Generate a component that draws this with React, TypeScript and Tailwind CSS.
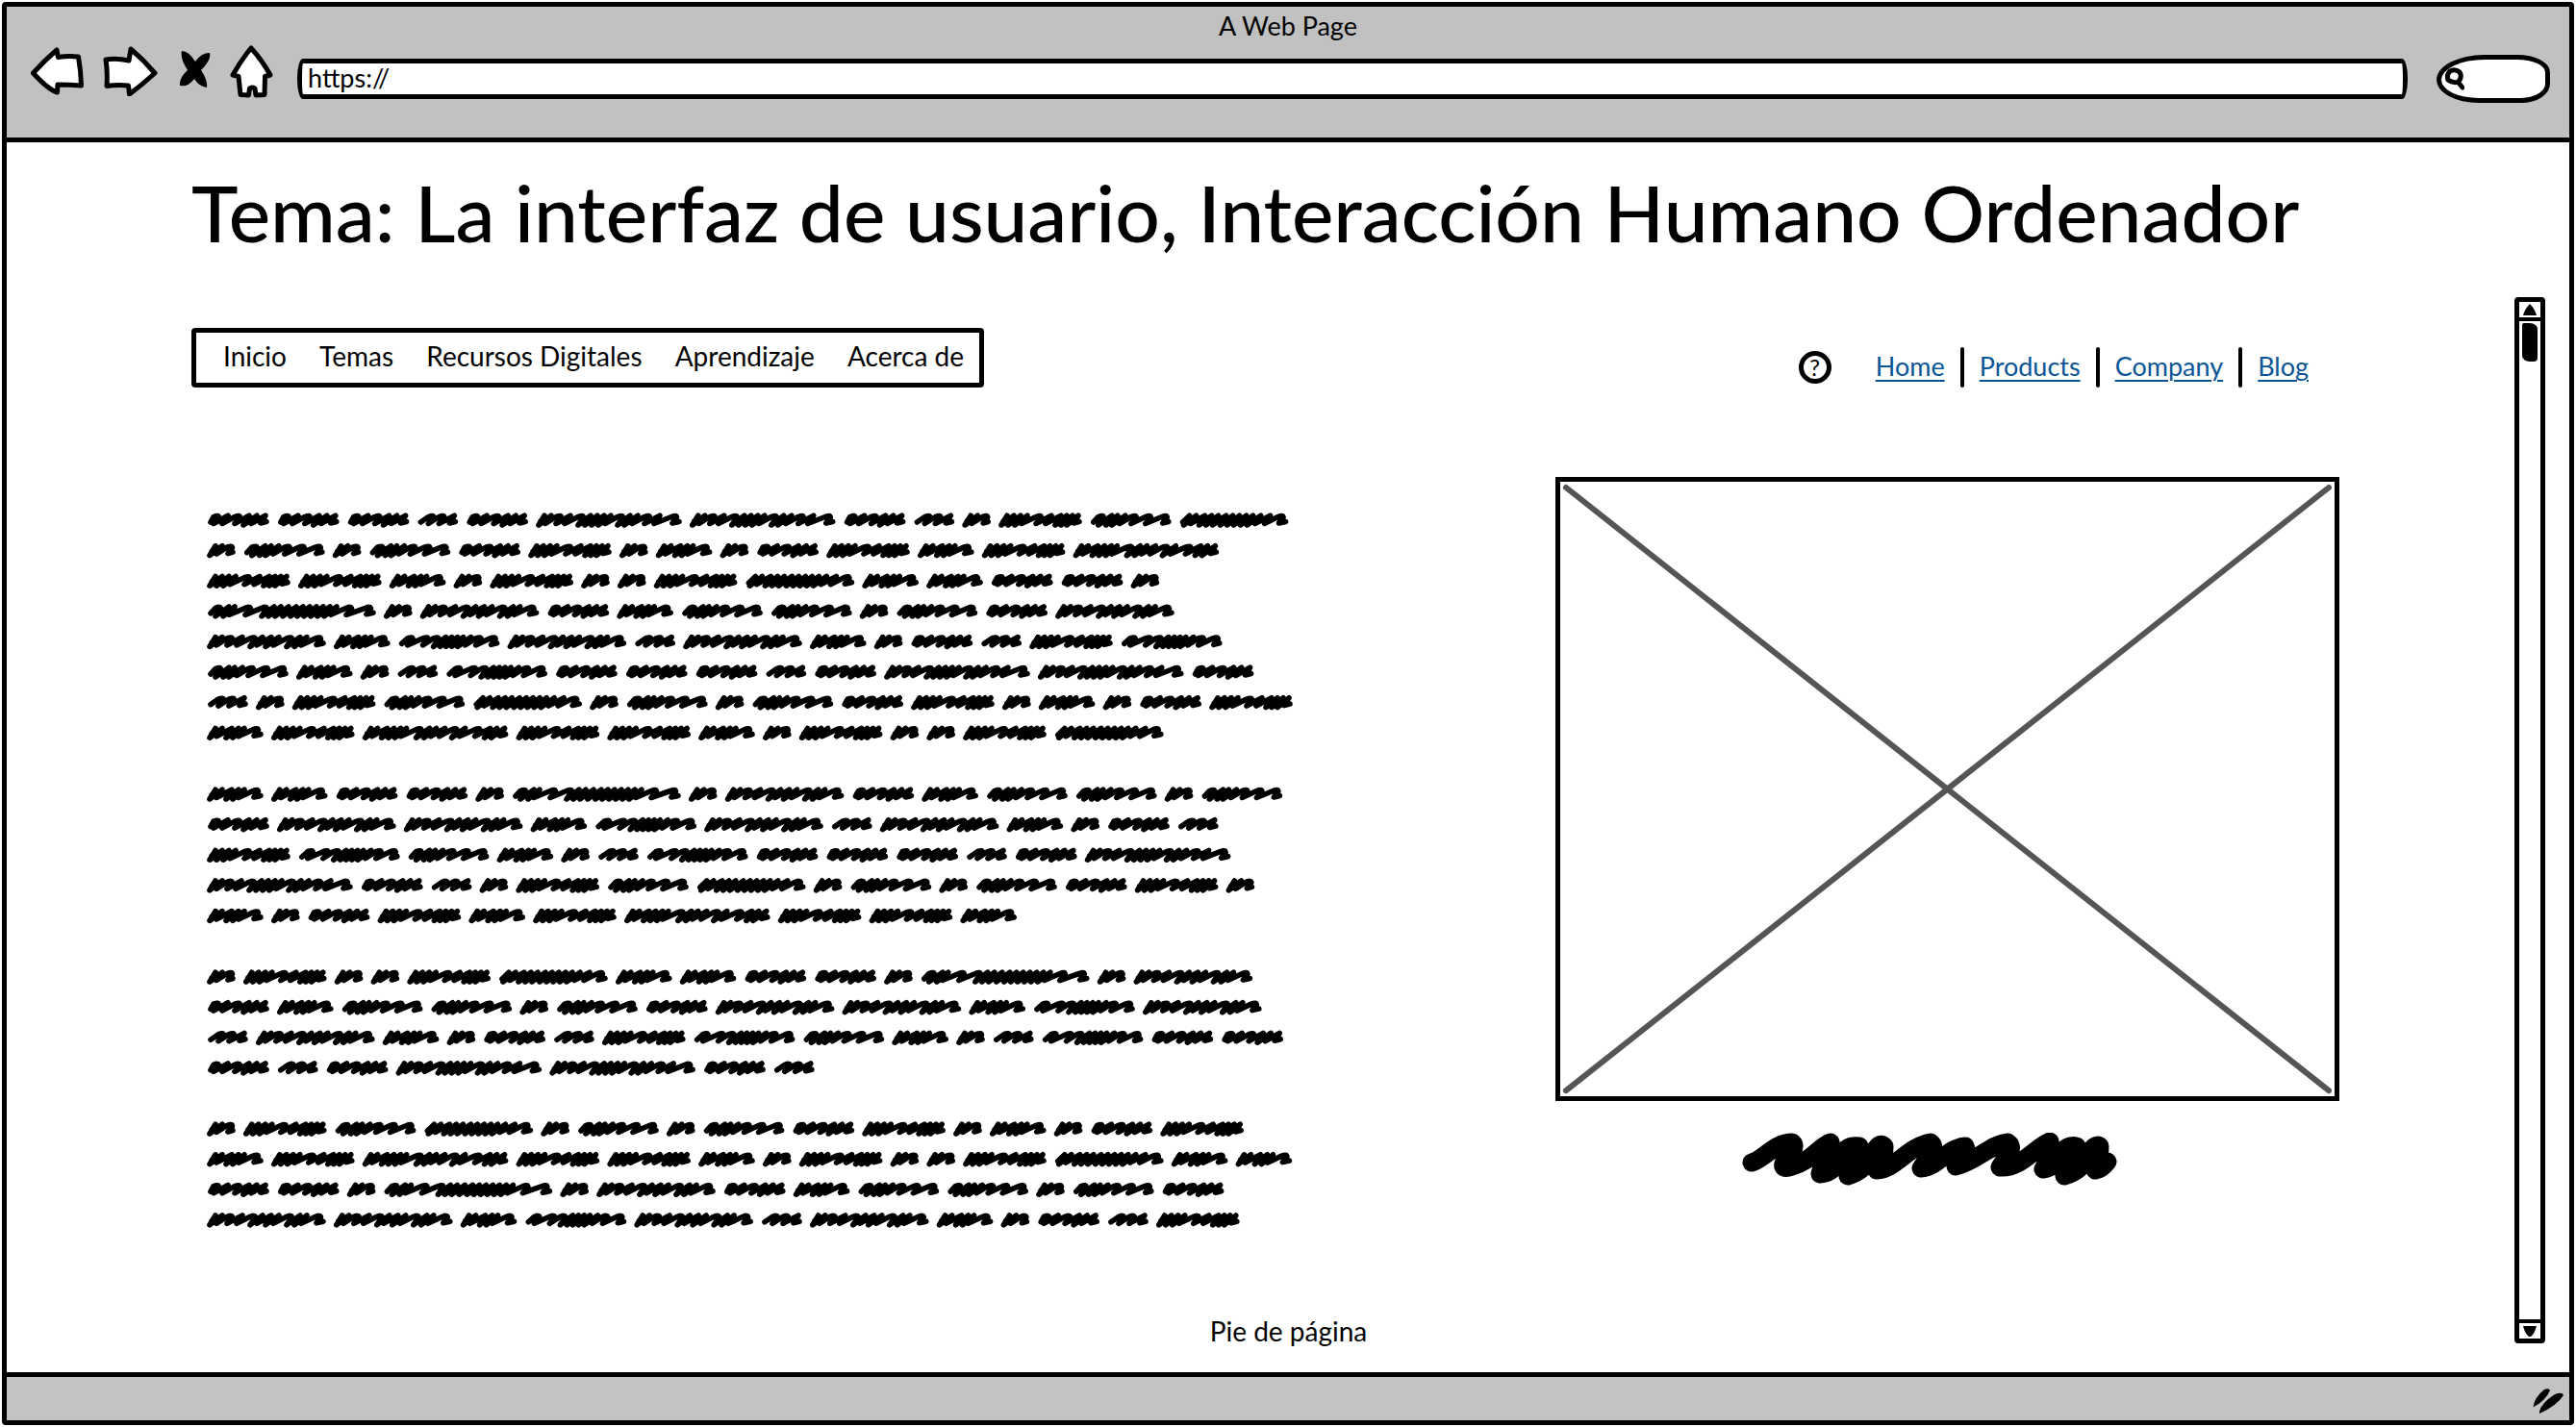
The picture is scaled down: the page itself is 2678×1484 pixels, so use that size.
import React from "react";

type Word = { width: number; heavy: boolean; tops: number[] };

// Scribbled words: the x positions of each pen peak, in pixels from the word's left edge.
const WORDS: Record<string, Word> = {
  b: { width: 29, heavy: true, tops: [8, 15, 26] },
  c: { width: 42, heavy: false, tops: [17, 28, 38] },
  d: { width: 58, heavy: true, tops: [8, 15, 25, 32, 38, 53] },
  e: { width: 64, heavy: false, tops: [12, 21, 34, 43, 51, 60] },
  f: { width: 84, heavy: false, tops: [14, 22, 28, 36, 48, 63, 80] },
  g: { width: 86, heavy: true, tops: [8, 15, 22, 29, 44, 54, 64, 70, 76, 82] },
  h: { width: 105, heavy: false, tops: [15, 31, 42, 49, 55, 61, 67, 75, 86, 101] },
  i: { width: 113, heavy: false, tops: [10, 17, 26, 33, 40, 48, 55, 62, 69, 76, 84, 94, 108] },
  j: { width: 123, heavy: true, tops: [8, 15, 26, 36, 50, 57, 66, 74, 88, 96, 103, 118] },
  k: { width: 151, heavy: true, tops: [8, 15, 26, 35, 49, 56, 63, 70, 77, 90, 97, 105, 118, 128, 146] },
  K: { width: 151, heavy: true, tops: [8, 15, 25, 32, 39, 45, 61, 69, 76, 85, 98, 106, 122, 132, 139, 147] },
  m: { width: 175, heavy: false, tops: [14, 22, 28, 45, 62, 69, 76, 84, 92, 99, 106, 113, 120, 127, 134, 150, 170] },
};

const PARAGRAPHS = [
  ["eeecekkecbgfi", "bfbfegbdbegdgK", "ggdbgbbgiddeeb", "mbjedffbfej", "jdhjcjdbecgh", "fdbcheeecekke", "cbgfibfbfegbdbeg", "dgKggdbgbbgi"],
  ["ddeebmbjedffbf", "ejjdhjcjdbec", "ghfdbcheeecek", "kecbgfibfbfegb", "dbegdgKggd"],
  ["bgbbgiddeebmbj", "edffbfejjdhj", "cjdbecghfdbchee", "ecekkec"],
  ["bgfibfbfegbdbeg", "dgKggdbgbbgidd", "eebmbjedffbfe", "jjdhjcjdbecg"],
];

const PITCH = 31.6;
const SPACE = 8.8;

function scribble(word: Word, x: number, y: number) {
  let prev = 0;
  let d = word.heavy ? `M${x + 4} ${y + 1}L${x + 3.5} ${y + 4}` : `M${x + 3} ${y + 2}`;
  word.tops.forEach((top, i) => {
    const next = word.tops[i + 1];
    if (top - prev > 10) d += `L${x + top - 6} ${y - 3.5}Q${x + top - 1} ${y - 5.5} ${x + top - 0.5} ${y - 3}`;
    else d += `L${x + top} ${y - 4.8}`;
    if (next === undefined) d += `L${x + top - 5} ${y + 3}L${x + word.width - 3} ${y + 1.5}`;
    else d += `L${x + top - 6} ${y + (next - top < 9 ? 5 : 3.5)}`;
    prev = top;
  });
  return d;
}

function ScribbleParagraph({ lines }: { lines: string[] }) {
  const height = Math.round(lines.length * PITCH);
  const d = lines
    .map((line, row) => {
      let x = 1;
      return line
        .split("")
        .map((key) => {
          const path = scribble(WORDS[key], x, 17 + row * PITCH);
          x += WORDS[key].width + SPACE;
          return path;
        })
        .join("");
    })
    .join("");
  return (
    <svg width="1140" height={height} viewBox={`0 0 1140 ${height}`} className="block max-w-full" aria-hidden="true">
      <path d={d} fill="none" stroke="#000" strokeWidth="5.6" strokeLinecap="round" strokeLinejoin="round" />
    </svg>
  );
}

function BackIcon() {
  return (
    <svg width="55" height="50" viewBox="32 48 55 50" aria-hidden="true">
      <path d="M34.5 75Q46 62 59 51L60.5 58.5Q70 57 81.5 58Q84 72 84.500 88Q72 87 60 87L59.500 95Q50 92 34.500 75Z" fill="#fff" stroke="#000" strokeWidth="5" strokeLinejoin="round" />
    </svg>
  );
}

function ForwardIcon() {
  return (
    <svg width="58" height="52" viewBox="107 47 58 52" aria-hidden="true">
      <path d="M110 61Q121 59 134 62L136 50Q149 61 161 75Q148 87 134.500 97L133.500 88Q121 87 111 88.500Q112 74 110 61Z" fill="#fff" stroke="#000" strokeWidth="5" strokeLinejoin="round" />
    </svg>
  );
}

function StopIcon() {
  return (
    <svg width="34" height="50" viewBox="186 48 34 50" aria-hidden="true">
      <path d="M190 52Q197 52 204 63Q210 54 219 54Q221 61 210 72Q217 82 216 90Q208 89 203 81Q196 90 188 88Q187 80 196 72Q188 60 190 52Z" />
    </svg>
  );
}

function HomeIcon() {
  return (
    <svg width="46" height="56" viewBox="239 45 46 56" aria-hidden="true">
      <path d="M261 49Q251 61 242 77L248 78.500L250 97.500L258.500 98L259.500 91Q262 89 265 91L266 98L275 97.500L275.500 78.500L281 77Q272 61 261 49Z" fill="#fff" stroke="#000" strokeWidth="5" strokeLinejoin="round" />
    </svg>
  );
}

const menu = ["Inicio", "Temas", "Recursos Digitales", "Aprendizaje", "Acerca de"];
const links = ["Home", "Products", "Company", "Blog"];

export default function App() {
  return (
    <div className="flex min-h-screen bg-white p-0.5 font-['Lato',sans-serif] text-[27px] leading-8 text-black">
      <div className="flex flex-1 flex-col rounded-sm border-[5px] border-black">
        <header className="border-b-[5px] border-black bg-[#c1c1c1] pt-1 pb-[22px]">
          <p className="text-center">A Web Page</p>
          <div className="flex h-[78px] items-center gap-6 pr-5 pl-[25px]">
            <div className="flex items-center gap-5 pb-4">
              <button type="button" aria-label="Back"><BackIcon /></button>
              <button type="button" aria-label="Forward"><ForwardIcon /></button>
              <button type="button" aria-label="Stop"><StopIcon /></button>
              <button type="button" aria-label="Home"><HomeIcon /></button>
            </div>
            <input
              aria-label="Address"
              defaultValue="https://"
              className="h-[42px] min-w-0 flex-1 rounded-[6px/20px] border-[5px] border-black bg-white px-1.5 pb-1 outline-none"
            />
            <label className="ml-1.5 flex h-[50px] w-[118px] items-center rounded-[50px_34px_30px_44px/26px_18px_20px_24px] border-[5px] border-black bg-white pl-1">
              <svg width="20" height="24" viewBox="0 0 20 24" className="shrink-0" aria-hidden="true">
                <path d="M15 5Q10 1 5 4Q1 8 3 13Q8 17 14 15Q18 10 15 5ZM13 15L18 21" fill="none" stroke="#000" strokeWidth="5" strokeLinecap="round" strokeLinejoin="round" />
              </svg>
              <input aria-label="Search" className="w-full min-w-0 bg-transparent outline-none" />
            </label>
          </div>
        </header>

        <main className="flex flex-1">
          <div className="flex flex-1 flex-col">
            <div className="pr-[182px] pl-[192px]">
              <h1 className="pt-6 text-[82px] leading-[96px] font-medium whitespace-nowrap">
                Tema: La interfaz de usuario, Interacción Humano Ordenador
              </h1>
              <div className="mt-[73px] flex items-start justify-between">
                <nav aria-label="Principal" className="flex h-[62px] w-[824px] items-center justify-between rounded-sm border-[5px] border-black pr-4 pb-1 pl-7 text-[28px]">
                  {menu.map((item) => (
                    <a key={item} href="#" className="whitespace-nowrap">{item}</a>
                  ))}
                </nav>
                <div className="mt-5 mr-8 flex items-center">
                  <button type="button" aria-label="Help" className="mr-[46px] flex size-[34px] items-center justify-center rounded-[50%] border-[5px] border-black text-[24px] leading-6">
                    ?
                  </button>
                  <nav aria-label="Links" className="flex items-center">
                    {links.map((item, i) => (
                      <React.Fragment key={item}>
                        {i > 0 && <span className="mx-4 h-[42px] w-1 rounded-full bg-black" />}
                        <a href="#" className="pb-0.5 text-[#0b5597] underline decoration-2 underline-offset-4">{item}</a>
                      </React.Fragment>
                    ))}
                  </nav>
                </div>
              </div>
              <div className="mt-[93px] flex items-start justify-between">
                <article aria-label="Contenido" className="flex flex-col gap-8 pt-7 pl-4">
                  {PARAGRAPHS.map((lines, i) => (
                    <ScribbleParagraph key={i} lines={lines} />
                  ))}
                </article>
                <figure className="flex w-[36.5%] shrink-0 flex-col items-center">
                  <div className="w-full border-[5px] border-black p-0.5">
                    <svg viewBox="0 0 802 636" className="block w-full" aria-label="Imagen">
                      <path d="M4 4L798 632M798 4L4 632" stroke="#555" strokeWidth="6" strokeLinecap="round" />
                    </svg>
                  </div>
                  <figcaption className="mt-[33px] pr-9">
                    <svg width="390" height="56" viewBox="32 38 390 56" className="block" aria-label="Pie de imagen">
                      <path
                        d="M42 69C54 66 66 48 84 48C90 52 82 62 75 70Q73 77 84 73C104 68 112 52 124 48C126 56 114 72 113 81Q128 80 133 64Q140 50 154 52Q150 70 142 83Q160 78 168 60Q175 46 180 52Q180 70 172 77C192 76 204 52 228 48C236 54 222 68 218 75C236 74 244 54 264 52Q268 60 254 73C276 68 290 50 308 48C318 54 304 66 300 74C322 76 338 52 352 47Q354 60 345 76Q358 74 363 60Q370 50 380 52Q378 70 367 83Q386 78 392 60Q400 48 404 52Q404 66 399 77Q406 76 412 68"
                        fill="none"
                        stroke="#000"
                        strokeWidth="19"
                        strokeLinecap="round"
                        strokeLinejoin="round"
                      />
                    </svg>
                  </figcaption>
                </figure>
              </div>
            </div>
            <p className="mt-auto pb-[27px] pl-[58px] text-center text-[28px]">Pie de página</p>
          </div>

          <div className="mt-[161px] mr-[25px] mb-[30px] flex w-8 flex-col rounded-sm border-[5px] border-black">
            <button type="button" aria-label="Scroll up" className="flex h-5 items-center justify-center border-b-4 border-black">
              <svg width="14" height="12" viewBox="0 0 14 12" aria-hidden="true"><path d="M7 0Q12 5 14 12H0Q2 5 7 0Z" /></svg>
            </button>
            <div className="flex flex-1 justify-center pt-0.5">
              <div className="h-10 w-4 rounded-[2px_8px_4px_8px/2px_6px_4px_6px] bg-black" />
            </div>
            <button type="button" aria-label="Scroll down" className="flex h-5 items-center justify-center border-t-4 border-black">
              <svg width="14" height="11" viewBox="0 0 14 11" aria-hidden="true"><path d="M0 0H14Q12 8 8 11H6Q2 8 0 0Z" /></svg>
            </button>
          </div>
        </main>

        <footer className="flex h-[50px] items-center justify-end border-t-[5px] border-black bg-[#c3c3c3] pt-1 pr-1.5">
          <svg width="32" height="28" viewBox="2635 1445 32 28" aria-hidden="true">
            <path d="M2635.500 1465Q2637 1455 2647 1447Q2652 1445 2653 1448Q2648 1459 2636 1465ZM2642 1470Q2644 1461 2658 1452Q2666 1449 2667 1453Q2660 1464 2642 1472Z" />
          </svg>
        </footer>
      </div>
    </div>
  );
}
